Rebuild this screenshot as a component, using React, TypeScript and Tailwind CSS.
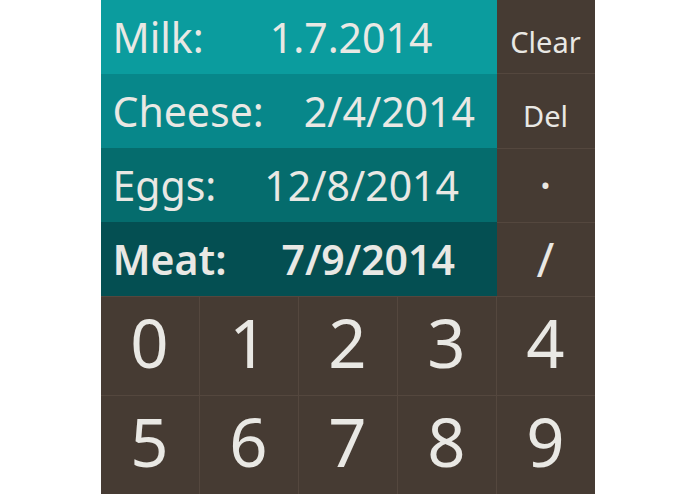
export default function App() {
  const items = [
    { name: 'Milk:', date: '1.7.2014', bg: 'bg-[#0b9c9e]', gap: 'ml-[66px]', bold: false },
    { name: 'Cheese:', date: '2/4/2014', bg: 'bg-[#07878a]', gap: 'ml-[40px]', bold: false },
    { name: 'Eggs:', date: '12/8/2014', bg: 'bg-[#056c6d]', gap: 'ml-[48px]', bold: false },
    { name: 'Meat:', date: '7/9/2014', bg: 'bg-[#044f52]', gap: 'ml-[55px]', bold: true },
  ];
  const digits = ['0', '1', '2', '3', '4', '5', '6', '7', '8', '9'];

  return (
    <div className="min-h-screen bg-white flex justify-center font-['Noto_Sans',sans-serif] text-[#e9e8e4]">
      <div className="w-[494px] h-[494px] flex flex-col bg-[#54473e]">
        <div className="flex h-[296px]">
          {/* items list */}
          <div className="w-[396px] flex flex-col">
            {items.map((item) => (
              <div
                key={item.name}
                className={`h-[74px] flex items-center pl-[12px] text-[41px] leading-none ${item.bg} ${item.bold ? 'font-semibold' : ''}`}
              >
                <span>{item.name}</span>
                <span className={item.gap}>{item.date}</span>
              </div>
            ))}
          </div>

          {/* side keys */}
          <div className="flex-1 flex flex-col gap-px">
            <button className="flex-1 min-h-0 bg-[#463b33] flex items-center justify-center leading-none">
              <span className="text-[29px] pt-[9px]">Clear</span>
            </button>
            <button className="flex-1 min-h-0 bg-[#463b33] flex items-center justify-center leading-none">
              <span className="text-[29px] pt-[9px]">Del</span>
            </button>
            <button className="flex-1 min-h-0 bg-[#463b33] flex items-center justify-center leading-none">
              <span className="text-[48px] -translate-y-[14px]">.</span>
            </button>
            <button className="flex-1 min-h-0 bg-[#463b33] flex items-center justify-center leading-none">
              <span className="text-[48px]">/</span>
            </button>
          </div>
        </div>

        {/* number pad */}
        <div className="flex-1 grid grid-cols-5 grid-rows-2 gap-px pt-px">
          {digits.map((d) => (
            <button key={d} className="bg-[#463b33] flex items-center justify-center text-[67px] leading-none pb-[8px]">
              {d}
            </button>
          ))}
        </div>
      </div>
    </div>
  );
}
